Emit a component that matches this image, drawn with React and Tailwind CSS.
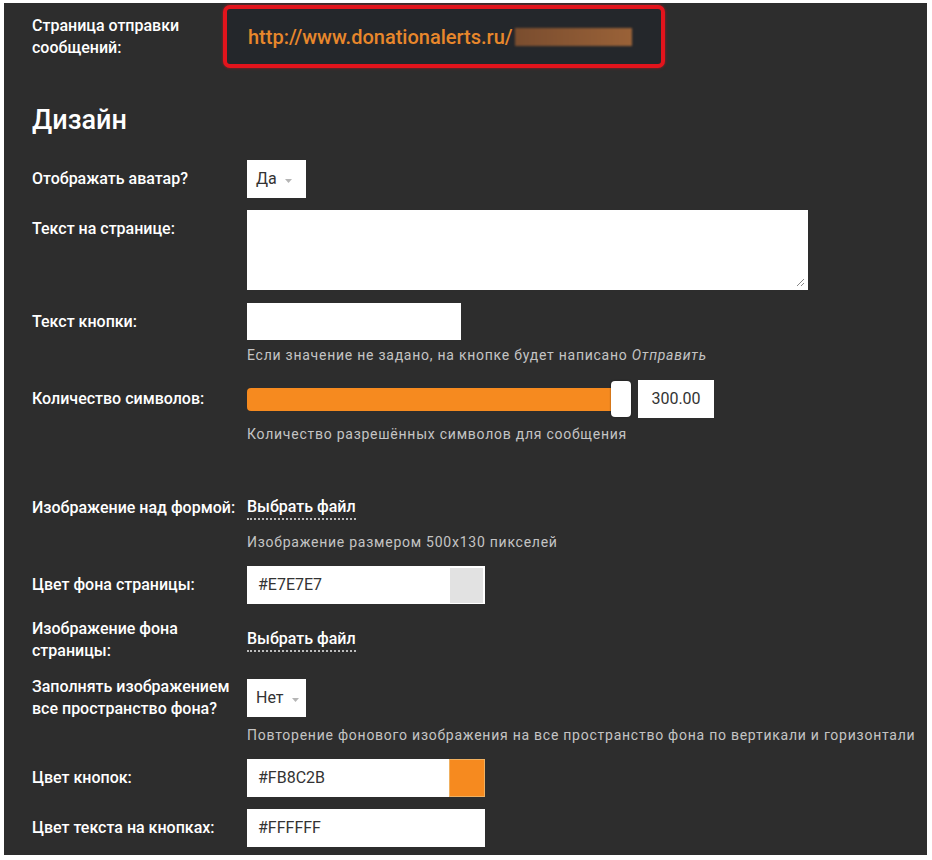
import React from 'react';

const font = { fontFamily: 'Roboto, "Liberation Sans", sans-serif' };

const Label = ({ children, top = false }) => (
    <div className={`w-[215px] shrink-0 pr-2 text-[16px] leading-[22px] font-medium text-white ${top ? 'pt-2 self-start' : ''}`}>
        {children}
    </div>
);

const Help = ({ children }) => (
    <div className="pl-[215px] text-[14px] leading-5 tracking-[0.75px] text-[#c4c4c4]">{children}</div>
);

const Caret = () => (
    <svg width="7" height="4" viewBox="0 0 7 4" className="ml-2 mt-1">
        <path d="M0 0 L7 0 L3.5 4 Z" fill="#b5b5b5" />
    </svg>
);

const Select = ({ value }) => (
    <div className="flex h-[38px] w-[59px] items-center bg-white pl-[9px] text-[16px] text-[#333]">
        {value}
        <Caret />
    </div>
);

const FileButton = () => (
    <div className="flex h-[38px] items-center">
        <span className="border-b-2 border-dotted border-[#bdbdbd] pb-[1px] text-[16px] leading-5 font-medium text-white">
            Выбрать файл
        </span>
    </div>
);

const ColorInput = ({ value, swatch }) => (
    <div className="flex h-[38px] w-[238px] items-center justify-between bg-white pl-[11px] text-[16px] text-[#333]">
        <span>{value}</span>
        {swatch === 'orange' && <div className="h-full w-[36px] border border-[#f0b060] bg-[#f68a1f]" />}
        {swatch === 'gray' && <div className="mr-[2px] h-[35px] w-[33px] bg-[#e2e2e2]" />}
    </div>
);

const App = () => {
    return (
        <div className="h-[860px] w-[932px] bg-white" style={font}>
            <div className="ml-[4px] mt-[3px] flex h-[852px] w-[923px] flex-col bg-[#2d2d2d] pl-[28px] pt-[2px]">
                {/* message page link */}
                <div className="flex items-center">
                    <div className="w-[191px] shrink-0 text-[16px] leading-[22px] font-medium text-white">
                        Страница отправки сообщений:
                    </div>
                    <div className="flex h-[63px] w-[442px] items-center rounded-[7px] border-[4px] border-[#e3141c] bg-[#24272b] pl-[21px] shadow-[0_0_3px_rgba(227,20,28,0.6)]">
                        <span className="text-[20px] font-medium text-[#e8872b]">http://www.donationalerts.ru/</span>
                        <div className="ml-[2px] h-[18px] w-[117px] bg-gradient-to-r from-[#7a4d2f] to-[#9a6238] blur-[1px]" />
                    </div>
                </div>

                <h2 className="mt-[35px] text-[27px] leading-[34px] font-medium text-white">Дизайн</h2>

                <div className="mt-[23px] flex items-center">
                    <Label>Отображать аватар?</Label>
                    <Select value="Да" />
                </div>

                <div className="mt-[12px] flex">
                    <Label top>Текст на странице:</Label>
                    <div className="relative h-[80px] w-[561px] bg-white">
                        <svg width="10" height="10" viewBox="0 0 10 10" className="absolute bottom-[3px] right-[3px]">
                            <path d="M9 2 L2 9 M9 6 L6 9" stroke="#888" strokeWidth="1" />
                        </svg>
                    </div>
                </div>

                <div className="mt-[13px] flex items-center">
                    <Label>Текст кнопки:</Label>
                    <div className="h-[37px] w-[214px] bg-white" />
                </div>
                <div className="mt-[5px]">
                    <Help>
                        Если значение не задано, на кнопке будет написано <i>Отправить</i>
                    </Help>
                </div>

                <div className="mt-[15px] flex items-center">
                    <Label>Количество символов:</Label>
                    <div className="flex items-center">
                        <div className="h-[23px] w-[366px] rounded-l-[4px] bg-[#f68a1f]" />
                        <div className="ml-[-2px] h-[36px] w-[20px] rounded-[4px] bg-white shadow-[0_0_2px_rgba(0,0,0,0.5)]" />
                        <div className="ml-[7px] flex h-[38px] w-[76px] items-center justify-center bg-white text-[16px] text-[#333]">
                            300.00
                        </div>
                    </div>
                </div>
                <div className="mt-[6px]">
                    <Help>Количество разрешённых символов для сообщения</Help>
                </div>

                <div className="mt-[45px] flex items-center">
                    <Label>Изображение над формой:</Label>
                    <FileButton />
                </div>
                <div className="mt-[5px]">
                    <Help>Изображение размером 500x130 пикселей</Help>
                </div>

                <div className="mt-[14px] flex items-center">
                    <Label>Цвет фона страницы:</Label>
                    <ColorInput value="#E7E7E7" swatch="gray" />
                </div>

                <div className="mt-[14px] flex items-center">
                    <Label>Изображение фона страницы:</Label>
                    <FileButton />
                </div>

                <div className="mt-[14px] flex items-center">
                    <Label>Заполнять изображением все пространство фона?</Label>
                    <Select value="Нет" />
                </div>
                <div className="mt-[5px]">
                    <Help>Повторение фонового изображения на все пространство фона по вертикали и горизонтали</Help>
                </div>

                <div className="mt-[14px] flex items-center">
                    <Label>Цвет кнопок:</Label>
                    <ColorInput value="#FB8C2B" swatch="orange" />
                </div>

                <div className="mt-[12px] flex items-center">
                    <Label>Цвет текста на кнопках:</Label>
                    <ColorInput value="#FFFFFF" />
                </div>
            </div>
        </div>
    );
};

export default App;
